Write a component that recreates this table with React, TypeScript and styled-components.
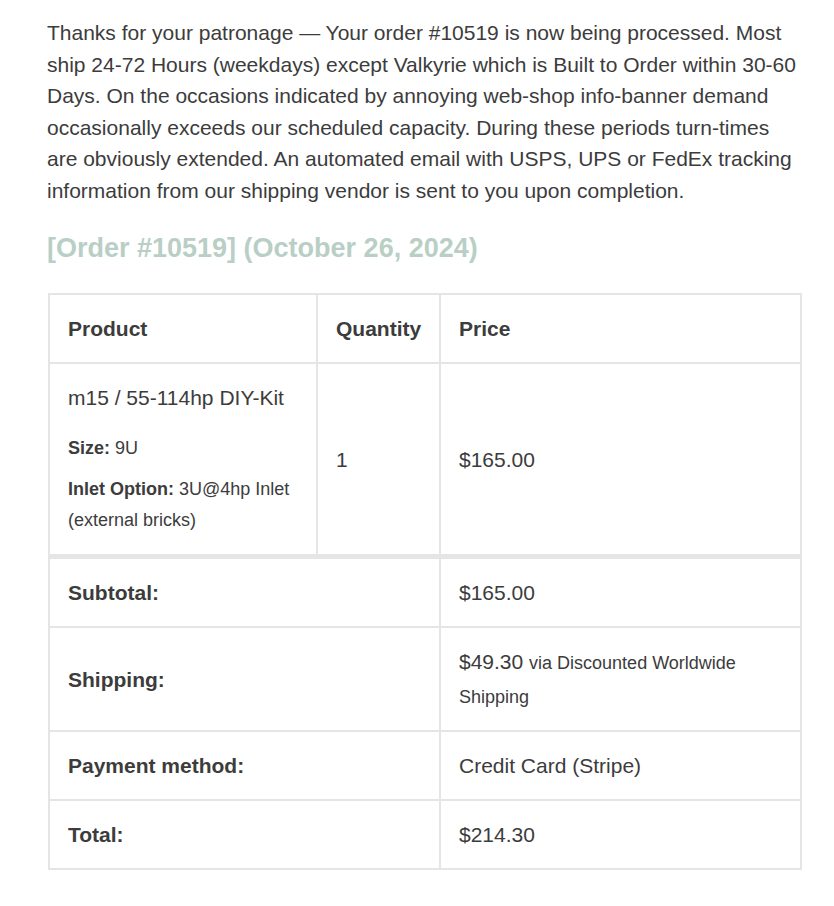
import React from "react";
import styled, { createGlobalStyle } from "styled-components";

const Global = createGlobalStyle`
  html, body { margin: 0; padding: 0; background: #ffffff; }
  body { font-family: "Liberation Sans", Arial, sans-serif; color: #3c3c3c; }
`;

const Page = styled.div`
  padding: 17px 34px 30px 47px;
  width: 753px;
`;

const Intro = styled.p`
  margin: 0;
  font-size: 21px;
  line-height: 31.5px;
  color: #3c3c3c;
`;

const Heading = styled.h2`
  margin: 22px 0 25px;
  font-size: 27px;
  line-height: 40px;
  font-weight: bold;
  color: #b9cfc5;
`;

const Table = styled.table`
  width: 752px;
  table-layout: fixed;
  border-collapse: collapse;
  border: 2px solid #e5e5e5;
  margin-left: 1px;
  font-size: 21px;
  line-height: 31px;
  color: #3c3c3c;
`;

const Col = styled.col<{ $w: number }>`
  width: ${(p) => p.$w}px;
`;

const Th = styled.th`
  box-sizing: border-box;
  text-align: left;
  font-weight: bold;
  padding: 18px 18px;
  border: 2px solid #e5e5e5;
  vertical-align: middle;
`;

const Td = styled.td<{ $sep?: boolean }>`
  box-sizing: border-box;
  text-align: left;
  padding: 18px 18px;
  border: 2px solid #e5e5e5;
  border-top-width: ${(p) => (p.$sep ? "5px" : "2px")};
  vertical-align: middle;
`;

const LabelTd = styled(Td)`
  font-weight: bold;
`;

const ProductName = styled.div`
  line-height: 32px;
`;

const Meta = styled.ul`
  list-style: none;
  margin: 19px 0 0;
  padding: 0;
  font-size: 18px;
  line-height: 31px;
`;

const MetaItem = styled.li`
  margin: 0 0 10px;
  &:last-child { margin-bottom: 0; }
  strong { font-weight: bold; }
`;

const Small = styled.small`
  font-size: 18px;
  line-height: 1;
`;

const ShipCell = styled(Td)`
  line-height: 34px;
  padding-top: 17px;
  padding-bottom: 17px;
`;

export default function App() {
  return (
    <>
      <Global />
      <Page>
        <Intro>
          Thanks for your patronage — Your order #10519 is now being processed. Most ship 24-72 Hours
          (weekdays) except Valkyrie which is Built to Order within 30-60 Days. On the occasions indicated
          by annoying web-shop info-banner demand occasionally exceeds our scheduled capacity. During these
          periods turn-times are obviously extended. An automated email with USPS, UPS or FedEx tracking
          information from our shipping vendor is sent to you upon completion.
        </Intro>
        <Heading>[Order #10519] (October 26, 2024)</Heading>
        <Table>
          <colgroup>
            <Col $w={268} />
            <Col $w={123} />
            <Col $w={361} />
          </colgroup>
          <thead>
            <tr>
              <Th>Product</Th>
              <Th>Quantity</Th>
              <Th>Price</Th>
            </tr>
          </thead>
          <tbody>
            <tr>
              <Td>
                <ProductName>m15 / 55-114hp DIY-Kit</ProductName>
                <Meta>
                  <MetaItem>
                    <strong>Size:</strong> 9U
                  </MetaItem>
                  <MetaItem>
                    <strong>Inlet Option:</strong> 3U@4hp Inlet (external bricks)
                  </MetaItem>
                </Meta>
              </Td>
              <Td>1</Td>
              <Td>$165.00</Td>
            </tr>
          </tbody>
          <tfoot>
            <tr>
              <LabelTd $sep colSpan={2}>Subtotal:</LabelTd>
              <Td $sep>$165.00</Td>
            </tr>
            <tr>
              <LabelTd colSpan={2}>Shipping:</LabelTd>
              <ShipCell>
                $49.30 <Small>via Discounted Worldwide Shipping</Small>
              </ShipCell>
            </tr>
            <tr>
              <LabelTd colSpan={2}>Payment method:</LabelTd>
              <Td>Credit Card (Stripe)</Td>
            </tr>
            <tr>
              <LabelTd colSpan={2}>Total:</LabelTd>
              <Td>$214.30</Td>
            </tr>
          </tfoot>
        </Table>
      </Page>
    </>
  );
}
